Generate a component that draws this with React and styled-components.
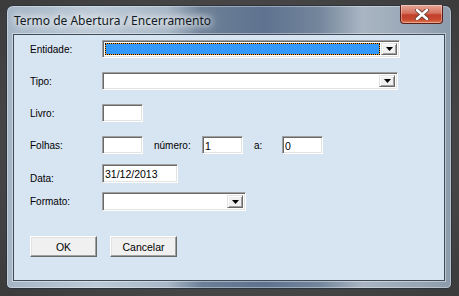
import React from "react";
import styled, { createGlobalStyle } from "styled-components";

const Global = createGlobalStyle`
  html, body {
    margin: 0;
    padding: 0;
    background: #464646;
  }
  #root {
    width: 459px;
    height: 296px;
  }
`;

const Desktop = styled.div`
  width: 459px;
  height: 296px;
  box-sizing: border-box;
  padding: 5px 7px 7px 6px;
  background: radial-gradient(ellipse at 50% 50%, #5a5a5a 0%, #454545 70%, #3b3b3b 100%);
`;

const Frame = styled.div`
  height: 284px;
  box-sizing: border-box;
  display: flex;
  flex-direction: column;
  padding: 0 6px 7px 6px;
  border-radius: 7px 7px 5px 5px;
  border: 1px solid #2c333b;
  background: linear-gradient(
    90deg,
    #a5b5c6 0%,
    #bccad7 20%,
    #a9b8c8 36%,
    #6b7f96 44%,
    #5f7390 58%,
    #72859b 70%,
    #a9b5c2 80%,
    #8d9cac 100%
  );
  box-shadow: inset 0 0 0 1px rgba(255, 255, 255, 0.35);
`;

const TitleBar = styled.div`
  height: 28px;
  display: flex;
  justify-content: space-between;
  align-items: flex-start;
`;

const Title = styled.div`
  padding: 6px 0 0 1px;
  font-family: "Noto Sans", "Open Sans", sans-serif;
  font-size: 12px;
  color: #111a24;
  text-shadow: 0 0 6px #fff, 0 0 10px #fff, 0 0 14px rgba(255, 255, 255, 0.9);
`;

const CloseButton = styled.div`
  width: 43px;
  height: 19px;
  margin-right: 2px;
  margin-top: -1px;
  display: flex;
  align-items: center;
  justify-content: center;
  box-sizing: border-box;
  border: 1px solid #5a1f17;
  border-top: none;
  border-radius: 0 0 4px 4px;
  background: linear-gradient(180deg, #e6a697 0%, #d6735f 45%, #c2402c 55%, #c8482f 80%, #e07a52 100%);
  box-shadow: inset 0 0 0 1px rgba(255, 255, 255, 0.35);
`;

const Client = styled.div`
  flex: 1;
  display: flex;
  flex-direction: column;
  padding: 5px 16px 0 16px;
  background: #d7e4f2;
  border: 1px solid #3f4b59;
  box-shadow: 0 0 0 1px rgba(255, 255, 255, 0.4);
  font-family: "Liberation Sans", Arial, sans-serif;
  font-size: 10px;
  color: #000;
`;

const Row = styled.div`
  display: flex;
  align-items: ${(p) => (p.$low ? "flex-end" : "center")};
  height: ${(p) => p.$h}px;
  margin-top: ${(p) => p.$mt}px;
`;

const Label = styled.span`
  width: 72px;
  flex-shrink: 0;
  margin-bottom: ${(p) => (p.$low ? "-1px" : "0")};
`;

const InlineLabel = styled.span`
  width: ${(p) => p.$w}px;
  margin-left: 11px;
  flex-shrink: 0;
`;

const Field = styled.div`
  width: ${(p) => p.$w}px;
  height: ${(p) => p.$h}px;
  box-sizing: border-box;
  display: flex;
  align-items: center;
  padding: 1px 2px 0 2px;
  background: #fff;
  border: 1px solid;
  border-color: #a0a0a0 #fff #fff #a0a0a0;
  box-shadow: inset 1px 1px 0 #696969, inset -1px -1px 0 #e3e3e3;
  font-size: 10.5px;
  align-self: ${(p) => (p.$top ? "flex-start" : "center")};
`;

const Combo = styled.div`
  width: ${(p) => p.$w}px;
  height: ${(p) => p.$h}px;
  box-sizing: border-box;
  display: flex;
  padding: 2px;
  background: #fff;
  border: 1px solid;
  border-color: #a0a0a0 #fff #fff #a0a0a0;
  box-shadow: inset 1px 1px 0 #696969, inset -1px -1px 0 #e3e3e3;
`;

const Selection = styled.div`
  flex: 1;
  margin-right: 1px;
  border: 1px dotted #000;
  background: linear-gradient(#3399ff, #3399ff) padding-box, #ff9c1a border-box;
`;

const Spacer = styled.div`
  flex: 1;
`;

const DropButton = styled.div`
  width: 16px;
  box-sizing: border-box;
  display: flex;
  align-items: center;
  justify-content: center;
  background: #f0f0f0;
  border: 1px solid;
  border-color: #e3e3e3 #696969 #696969 #e3e3e3;
  box-shadow: inset 1px 1px 0 #fff, inset -1px -1px 0 #a0a0a0;
`;

const ButtonRow = styled.div`
  display: flex;
  gap: 13px;
  margin-top: 25px;
`;

const Button = styled.div`
  width: 67px;
  height: 21px;
  box-sizing: border-box;
  display: flex;
  align-items: center;
  justify-content: center;
  background: #f0f0f0;
  border: 1px solid;
  border-color: #fff #696969 #696969 #fff;
  box-shadow: inset -1px -1px 0 #a0a0a0, inset 1px 1px 0 #e3e3e3;
  font-size: 10.5px;
`;

function Arrow() {
  return (
    <svg width="7" height="4" viewBox="0 0 7 4">
      <polygon points="0,0 7,0 3.5,4" fill="#000" />
    </svg>
  );
}

function CloseX() {
  return (
    <svg width="14" height="11" viewBox="0 0 14 11">
      <path
        d="M2 1 L12 10 M12 1 L2 10"
        stroke="#5b3a33"
        strokeWidth="4.2"
        strokeLinecap="round"
      />
      <path
        d="M2 1 L12 10 M12 1 L2 10"
        stroke="#fff"
        strokeWidth="2.6"
        strokeLinecap="round"
      />
    </svg>
  );
}

function Select({ w, h, focused }) {
  return (
    <Combo $w={w} $h={h}>
      {focused ? <Selection /> : <Spacer />}
      <DropButton>
        <Arrow />
      </DropButton>
    </Combo>
  );
}

export default function App() {
  return (
    <>
      <Global />
      <Desktop>
        <Frame>
          <TitleBar>
            <Title>Termo de Abertura / Encerramento</Title>
            <CloseButton>
              <CloseX />
            </CloseButton>
          </TitleBar>
          <Client>
            <Row $h={18} $mt={0}>
              <Label>Entidade:</Label>
              <Select w={298} h={18} focused />
            </Row>
            <Row $h={18} $mt={14}>
              <Label>Tipo:</Label>
              <Select w={296} h={18} />
            </Row>
            <Row $h={18} $mt={14}>
              <Label>Livro:</Label>
              <Field $w={41} $h={18} />
            </Row>
            <Row $h={18} $mt={14}>
              <Label>Folhas:</Label>
              <Field $w={41} $h={18} />
              <InlineLabel $w={48}>número:</InlineLabel>
              <Field $w={41} $h={18}>1</Field>
              <InlineLabel $w={28}>a:</InlineLabel>
              <Field $w={41} $h={18}>0</Field>
            </Row>
            <Row $h={19} $mt={10} $low>
              <Label $low>Data:</Label>
              <Field $w={76} $h={19} $top>
                31/12/2013
              </Field>
            </Row>
            <Row $h={19} $mt={9}>
              <Label>Formato:</Label>
              <Select w={144} h={19} />
            </Row>
            <ButtonRow>
              <Button>OK</Button>
              <Button>Cancelar</Button>
            </ButtonRow>
          </Client>
        </Frame>
      </Desktop>
    </>
  );
}
